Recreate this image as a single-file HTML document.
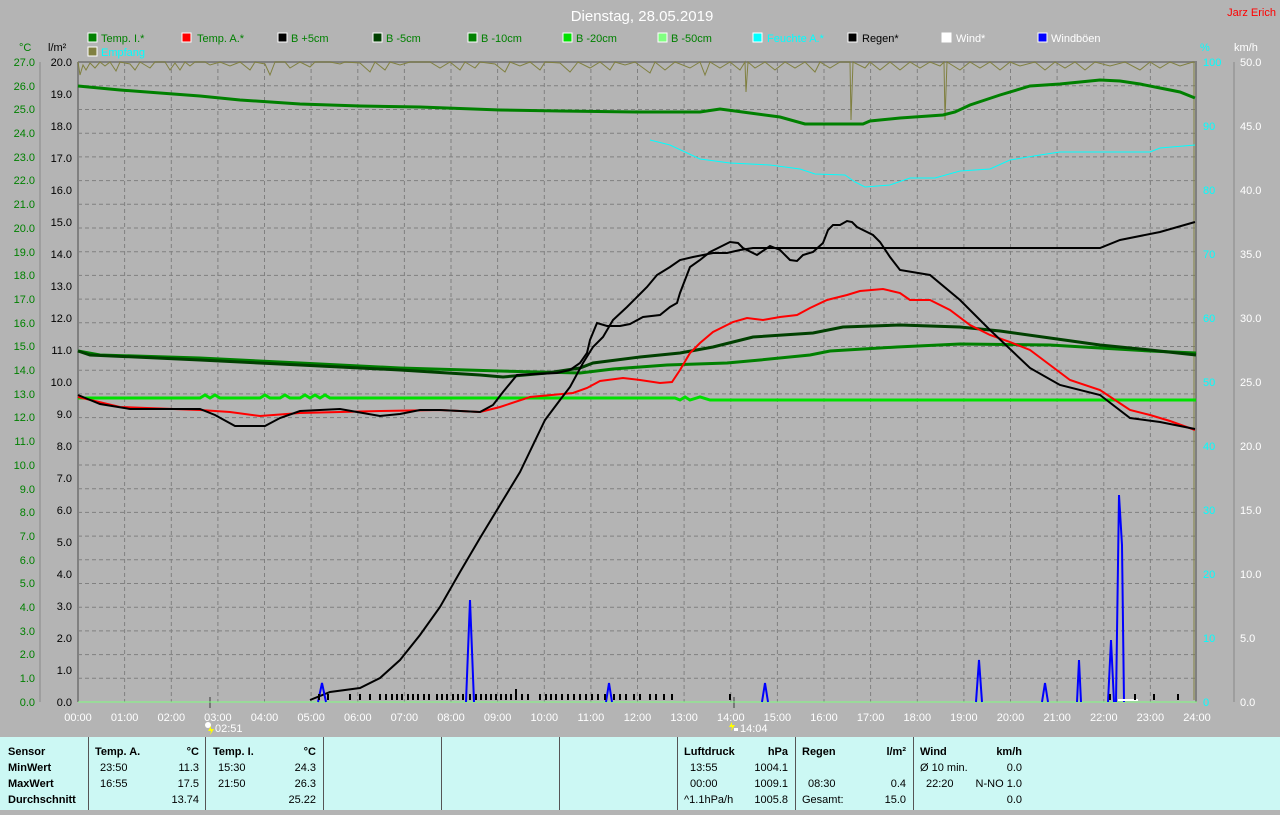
<!DOCTYPE html>
<html><head><meta charset="utf-8"><style>
html,body{margin:0;padding:0;background:#b4b4b4;}
body{width:1280px;height:810px;overflow:hidden;font-family:"Liberation Sans",sans-serif;}
svg text{font-family:"Liberation Sans",sans-serif;}
</style></head><body>
<svg width="1280" height="810" viewBox="0 0 1280 810" xmlns="http://www.w3.org/2000/svg">
<rect x="0" y="0" width="1280" height="810" fill="#b4b4b4"/>
<text x="642" y="21" font-size="15" fill="#fff" text-anchor="middle">Dienstag, 28.05.2019</text>
<text x="1276" y="16" font-size="11" fill="#ff0000" text-anchor="end">Jarz Erich</text>
<!-- legend -->
<g font-size="11">
<rect x="88" y="33" width="9" height="9" fill="#008000" stroke="#fff"/><text x="101" y="42" fill="#008000">Temp. I.*</text>
<rect x="182" y="33" width="9" height="9" fill="#ff0000" stroke="#fff"/><text x="197" y="42" fill="#008000">Temp. A.*</text>
<rect x="278" y="33" width="9" height="9" fill="#000" stroke="#fff"/><text x="291" y="42" fill="#008000">B +5cm</text>
<rect x="373" y="33" width="9" height="9" fill="#004000" stroke="#fff"/><text x="386" y="42" fill="#008000">B -5cm</text>
<rect x="468" y="33" width="9" height="9" fill="#008000" stroke="#fff"/><text x="481" y="42" fill="#008000">B -10cm</text>
<rect x="563" y="33" width="9" height="9" fill="#00e000" stroke="#fff"/><text x="576" y="42" fill="#008000">B -20cm</text>
<rect x="658" y="33" width="9" height="9" fill="#80ff80" stroke="#fff"/><text x="671" y="42" fill="#008000">B -50cm</text>
<rect x="753" y="33" width="9" height="9" fill="#00ffff" stroke="#fff"/><text x="767" y="42" fill="#00ffff">Feuchte A.*</text>
<rect x="848" y="33" width="9" height="9" fill="#000" stroke="#fff"/><text x="862" y="42" fill="#000">Regen*</text>
<rect x="942" y="33" width="9" height="9" fill="#fff" stroke="#fff"/><text x="956" y="42" fill="#fff">Wind*</text>
<rect x="1038" y="33" width="9" height="9" fill="#0000ff" stroke="#fff"/><text x="1051" y="42" fill="#fff">Windböen</text>
<rect x="88" y="47" width="9" height="9" fill="#808040" stroke="#fff"/><text x="101" y="56" fill="#00ffff">Empfang</text>
</g>
<text x="19" y="51" font-size="11" fill="#008000">°C</text>
<text x="48" y="51" font-size="11" fill="#000">l/m²</text>
<text x="1200" y="51" font-size="11" fill="#00ffff">%</text>
<text x="1234" y="51" font-size="11" fill="#fff">km/h</text>
<!-- axes lines -->
<line x1="40" y1="62" x2="40" y2="702" stroke="#888"/>
<line x1="1234" y1="62" x2="1234" y2="702" stroke="#888"/>
<!-- grid -->
<g stroke="#808080" stroke-dasharray="4,3" stroke-width="1">
<line x1="124.6" y1="62" x2="124.6" y2="702"/><line x1="171.3" y1="62" x2="171.3" y2="702"/><line x1="217.9" y1="62" x2="217.9" y2="702"/><line x1="264.5" y1="62" x2="264.5" y2="702"/><line x1="311.1" y1="62" x2="311.1" y2="702"/><line x1="357.8" y1="62" x2="357.8" y2="702"/><line x1="404.4" y1="62" x2="404.4" y2="702"/><line x1="451" y1="62" x2="451" y2="702"/><line x1="497.6" y1="62" x2="497.6" y2="702"/><line x1="544.3" y1="62" x2="544.3" y2="702"/><line x1="590.9" y1="62" x2="590.9" y2="702"/><line x1="637.5" y1="62" x2="637.5" y2="702"/><line x1="684.1" y1="62" x2="684.1" y2="702"/><line x1="730.8" y1="62" x2="730.8" y2="702"/><line x1="777.4" y1="62" x2="777.4" y2="702"/><line x1="824" y1="62" x2="824" y2="702"/><line x1="870.6" y1="62" x2="870.6" y2="702"/><line x1="917.3" y1="62" x2="917.3" y2="702"/><line x1="963.9" y1="62" x2="963.9" y2="702"/><line x1="1010.5" y1="62" x2="1010.5" y2="702"/><line x1="1057.1" y1="62" x2="1057.1" y2="702"/><line x1="1103.8" y1="62" x2="1103.8" y2="702"/><line x1="1150.4" y1="62" x2="1150.4" y2="702"/>
<line x1="78" y1="678.3" x2="1197" y2="678.3"/><line x1="78" y1="654.6" x2="1197" y2="654.6"/><line x1="78" y1="630.9" x2="1197" y2="630.9"/><line x1="78" y1="607.2" x2="1197" y2="607.2"/><line x1="78" y1="583.5" x2="1197" y2="583.5"/><line x1="78" y1="559.8" x2="1197" y2="559.8"/><line x1="78" y1="536.1" x2="1197" y2="536.1"/><line x1="78" y1="512.4" x2="1197" y2="512.4"/><line x1="78" y1="488.7" x2="1197" y2="488.7"/><line x1="78" y1="465" x2="1197" y2="465"/><line x1="78" y1="441.3" x2="1197" y2="441.3"/><line x1="78" y1="417.6" x2="1197" y2="417.6"/><line x1="78" y1="393.9" x2="1197" y2="393.9"/><line x1="78" y1="370.2" x2="1197" y2="370.2"/><line x1="78" y1="346.5" x2="1197" y2="346.5"/><line x1="78" y1="322.8" x2="1197" y2="322.8"/><line x1="78" y1="299.1" x2="1197" y2="299.1"/><line x1="78" y1="275.4" x2="1197" y2="275.4"/><line x1="78" y1="251.7" x2="1197" y2="251.7"/><line x1="78" y1="228" x2="1197" y2="228"/><line x1="78" y1="204.3" x2="1197" y2="204.3"/><line x1="78" y1="180.6" x2="1197" y2="180.6"/><line x1="78" y1="156.9" x2="1197" y2="156.9"/><line x1="78" y1="133.2" x2="1197" y2="133.2"/><line x1="78" y1="109.5" x2="1197" y2="109.5"/><line x1="78" y1="85.8" x2="1197" y2="85.8"/>
</g>
<!-- left C labels -->
<g font-size="11" fill="#008000" text-anchor="end">
<text x="35" y="66">27.0</text><text x="35" y="90">26.0</text><text x="35" y="113">25.0</text><text x="35" y="137">24.0</text><text x="35" y="161">23.0</text><text x="35" y="184">22.0</text><text x="35" y="208">21.0</text><text x="35" y="232">20.0</text><text x="35" y="256">19.0</text><text x="35" y="279">18.0</text><text x="35" y="303">17.0</text><text x="35" y="327">16.0</text><text x="35" y="350">15.0</text><text x="35" y="374">14.0</text><text x="35" y="398">13.0</text><text x="35" y="421">12.0</text><text x="35" y="445">11.0</text><text x="35" y="469">10.0</text><text x="35" y="493">9.0</text><text x="35" y="516">8.0</text><text x="35" y="540">7.0</text><text x="35" y="564">6.0</text><text x="35" y="587">5.0</text><text x="35" y="611">4.0</text><text x="35" y="635">3.0</text><text x="35" y="658">2.0</text><text x="35" y="682">1.0</text><text x="35" y="706">0.0</text>
</g>
<g font-size="11" fill="#000" text-anchor="end">
<text x="72" y="66">20.0</text><text x="72" y="98">19.0</text><text x="72" y="130">18.0</text><text x="72" y="162">17.0</text><text x="72" y="194">16.0</text><text x="72" y="226">15.0</text><text x="72" y="258">14.0</text><text x="72" y="290">13.0</text><text x="72" y="322">12.0</text><text x="72" y="354">11.0</text><text x="72" y="386">10.0</text><text x="72" y="418">9.0</text><text x="72" y="450">8.0</text><text x="72" y="482">7.0</text><text x="72" y="514">6.0</text><text x="72" y="546">5.0</text><text x="72" y="578">4.0</text><text x="72" y="610">3.0</text><text x="72" y="642">2.0</text><text x="72" y="674">1.0</text><text x="72" y="706">0.0</text>
</g>
<g font-size="11" fill="#00ffff">
<text x="1203" y="66">100</text><text x="1203" y="130">90</text><text x="1203" y="194">80</text><text x="1203" y="258">70</text><text x="1203" y="322">60</text><text x="1203" y="386">50</text><text x="1203" y="450">40</text><text x="1203" y="514">30</text><text x="1203" y="578">20</text><text x="1203" y="642">10</text><text x="1203" y="706">0</text>
</g>
<g font-size="11" fill="#fff">
<text x="1240" y="66">50.0</text><text x="1240" y="130">45.0</text><text x="1240" y="194">40.0</text><text x="1240" y="258">35.0</text><text x="1240" y="322">30.0</text><text x="1240" y="386">25.0</text><text x="1240" y="450">20.0</text><text x="1240" y="514">15.0</text><text x="1240" y="578">10.0</text><text x="1240" y="642">5.0</text><text x="1240" y="706">0.0</text>
</g>
<!-- time labels -->
<g font-size="11" fill="#fff" text-anchor="middle">
<text x="78" y="721">00:00</text><text x="124.6" y="721">01:00</text><text x="171.3" y="721">02:00</text><text x="217.9" y="721">03:00</text><text x="264.5" y="721">04:00</text><text x="311.1" y="721">05:00</text><text x="357.8" y="721">06:00</text><text x="404.4" y="721">07:00</text><text x="451" y="721">08:00</text><text x="497.6" y="721">09:00</text><text x="544.3" y="721">10:00</text><text x="590.9" y="721">11:00</text><text x="637.5" y="721">12:00</text><text x="684.1" y="721">13:00</text><text x="730.8" y="721">14:00</text><text x="777.4" y="721">15:00</text><text x="824" y="721">16:00</text><text x="870.6" y="721">17:00</text><text x="917.3" y="721">18:00</text><text x="963.9" y="721">19:00</text><text x="1010.5" y="721">20:00</text><text x="1057.1" y="721">21:00</text><text x="1103.8" y="721">22:00</text><text x="1150.4" y="721">23:00</text><text x="1197" y="721">24:00</text>
</g>
<line x1="210" y1="697" x2="210" y2="708" stroke="#777" stroke-width="2"/>
<line x1="734" y1="697" x2="734" y2="708" stroke="#777" stroke-width="2"/>
<circle cx="208" cy="725" r="3" fill="#fff"/><path d="M211 726 l-3 5 h3 l-1 4 4-6 h-3z" fill="#ff0"/>
<text x="215" y="732" font-size="11" fill="#fff">02:51</text>
<path d="M732 722 l-3 5 h3 l-1 4 4-6 h-3z" fill="#ff0"/><rect x="734" y="728" width="4" height="3" fill="#fff"/>
<text x="740" y="732" font-size="11" fill="#fff">14:04</text>

<!-- plot frame -->
<line x1="78" y1="62" x2="1197" y2="62" stroke="#808080" stroke-width="2"/>
<line x1="78" y1="62" x2="78" y2="702" stroke="#808080" stroke-width="2"/>
<line x1="1196" y1="62" x2="1196" y2="702" stroke="#808080" stroke-width="2"/>
<line x1="78" y1="702" x2="1197" y2="702" stroke="#80ff80" stroke-width="1"/>

<!-- Empfang olive -->
<polyline fill="none" stroke="#808040" stroke-width="1" points="78,62 80,75 83,65 86,70 90,63 95,68 100,62 105,66 110,62 116,71 120,62 130,64 135,70 140,62 150,68 155,62 165,62 170,70 175,63 180,70 185,62 190,66 195,62 205,62 210,65 220,62 230,66 240,62 250,70 255,62 265,64 270,75 275,62 285,62 290,68 300,62 310,67 315,62 330,62 340,64 345,62 360,63 370,72 375,62 385,70 390,62 400,65 410,62 430,62 440,68 450,62 460,70 465,62 475,68 480,62 495,64 505,72 510,62 520,66 530,62 540,70 545,62 560,63 570,72 578,62 590,68 600,62 610,70 615,62 625,65 635,62 650,73 655,62 665,70 675,62 690,68 700,62 705,75 710,62 720,68 730,62 740,70 745,62 746,92 748,62 755,68 765,62 775,70 785,62 795,68 805,62 815,72 820,62 830,68 840,62 850,62 851,120 853,62 865,68 870,62 880,70 890,62 900,70 910,62 920,68 930,62 940,66 944,62 945,120 947,62 960,70 970,62 980,68 990,62 1000,70 1010,62 1020,66 1035,62 1045,70 1055,62 1065,68 1075,62 1085,70 1095,62 1110,66 1125,62 1140,70 1150,62 1160,68 1170,62 1180,66 1193,62 1194,62 1194,700"/>
<!-- Temp I -->
<polyline fill="none" stroke="#008000" stroke-width="3" points="78,86 120,90 160,93 200,96 240,100 300,104 360,106 420,107 500,110 560,111 640,112 700,112 720,109 750,113 780,117 805,124 863,124 870,121 900,118 943,115 955,112 970,105 985,100 1000,95 1030,86 1060,84 1080,82 1100,80 1120,81 1140,84 1160,88 1180,92 1195,98"/>
<!-- Feuchte cyan -->
<polyline fill="none" stroke="#00ffff" stroke-width="1" points="650,140 670,145 700,159 730,163 770,165 800,169 815,174 845,175 855,182 865,187 890,185 910,178 935,178 960,171 990,169 1010,160 1040,155 1060,152 1100,152 1150,152 1160,148 1195,145"/>
<!-- B -20 bright green -->
<polyline fill="none" stroke="#00e000" stroke-width="3" points="78,398 200,398 205,395 210,398 215,395 220,398 260,398 265,395 270,398 280,398 285,395 290,398 300,398 305,395 310,398 315,395 320,398 325,395 330,398 675,398 680,400 685,397 690,400 700,397 710,400 1196,400"/>
<!-- B -10 green -->
<polyline fill="none" stroke="#008000" stroke-width="3" points="78,351 100,355 200,358 300,363 400,368 500,371 580,373 613,369 667,365 727,363 760,360 810,355 830,351 897,347 960,344 1050,345 1100,348 1150,351 1196,353"/>
<!-- B -5 dark green -->
<polyline fill="none" stroke="#004000" stroke-width="3" points="78,351 90,355 200,360 300,365 400,370 480,375 503,377 547,373 580,368 593,363 640,357 680,353 713,347 753,337 813,333 843,327 900,325 960,327 1000,331 1050,338 1100,345 1150,350 1196,355"/>
<!-- Temp A red -->
<polyline fill="none" stroke="#ff0000" stroke-width="2" points="78,397 120,407 200,410 230,412 260,416 300,413 380,411 440,410 480,412 500,407 530,397 573,393 587,388 600,381 623,378 640,380 660,383 672,382 680,370 690,353 700,343 713,332 733,322 747,318 763,320 780,317 797,315 810,308 827,300 847,295 860,291 883,289 900,293 910,300 930,300 950,310 970,325 990,335 1010,342 1030,350 1050,365 1070,380 1100,390 1115,400 1130,410 1150,415 1170,421 1195,430"/>
<!-- B +5 black (temp-like) -->
<polyline fill="none" stroke="#000" stroke-width="2" points="78,395 100,404 130,409 200,409 215,415 235,426 265,426 280,418 300,411 340,409 380,416 400,414 420,410 440,410 480,412 493,405 503,392 517,375 557,373 570,370 580,363 587,353 590,340 597,323 607,326 620,326 630,324 643,317 660,315 670,307 677,303 680,293 690,267 700,260 710,252 720,247 730,242 738,243 743,248 757,255 770,246 780,250 790,260 797,261 803,255 813,252 823,243 828,230 833,225 840,225 847,221 852,222 857,227 867,232 873,235 880,242 890,257 900,270 930,275 960,300 990,330 1030,368 1060,385 1100,395 1130,418 1160,422 1195,429"/>
<!-- steep black -->
<polyline fill="none" stroke="#000" stroke-width="2" points="310,700 330,692 360,688 380,678 400,660 420,635 440,607 460,572 480,538 500,505 520,472 545,420 560,400 570,387 583,363 593,347 603,337 613,320 627,307 637,297 647,287 657,275 670,267 680,260 693,257 713,253 727,253 740,250 753,248 900,248 1100,248 1120,240 1160,232 1195,222"/>
<!-- wind gusts blue -->
<g fill="none" stroke="#0000ff" stroke-width="2">
<polyline points="318,702 322,683 326,702"/>
<polyline points="466,702 470,600 474,702"/>
<polyline points="606,702 609,683 612,702"/>
<polyline points="762,702 765,683 768,702"/>
<polyline points="976,702 979,660 982,702"/>
<polyline points="1042,702 1045,683 1048,702"/>
<polyline points="1077,702 1079,660 1081,702"/>
<polyline points="1108,702 1111,640 1114,702"/>
<polyline points="1116,702 1119,495 1122,545 1124,702"/>
</g>
<path d="M1118 700 h20" stroke="#fff" stroke-width="2"/>
<!-- rain ticks -->
<g stroke="#000" stroke-width="2">
<path d="M319 694v6M328 694v6M350 694v6M360 694v6M370 694v6M380 694v6M386 694v6M392 694v6M397 694v6M402 694v6M408 694v6M413 694v6M418 694v6M424 694v6M429 694v6M437 694v6M442 694v6M447 694v6M453 694v6M458 694v6M463 694v6M470 694v6M476 694v6M481 694v6M486 694v6M491 694v6M496 694v6M501 694v6M506 694v6M511 694v6M516 689v11M522 694v6M528 694v6M540 694v6M546 694v6M551 694v6M556 694v6M562 694v6M568 694v6M574 694v6M580 694v6M586 694v6M592 694v6M598 694v6M605 694v6M614 694v6M620 694v6M626 694v6M634 694v6M640 694v6M650 694v6M656 694v6M664 694v6M672 694v6M730 694v6M1110 694v6M1135 694v6M1154 694v6M1178 694v6"/>
</g>
<!-- table -->
<rect x="0" y="737" width="1280" height="73" fill="#ccf8f4"/>
<g stroke="#555" stroke-width="1">
<line x1="88.5" y1="737" x2="88.5" y2="810"/><line x1="205.5" y1="737" x2="205.5" y2="810"/><line x1="323.5" y1="737" x2="323.5" y2="810"/><line x1="441.5" y1="737" x2="441.5" y2="810"/><line x1="559.5" y1="737" x2="559.5" y2="810"/><line x1="677.5" y1="737" x2="677.5" y2="810"/><line x1="795.5" y1="737" x2="795.5" y2="810"/><line x1="913.5" y1="737" x2="913.5" y2="810"/>
</g>
<g font-size="11" fill="#000">
<g font-weight="bold"><text x="8" y="755">Sensor</text><text x="8" y="771">MinWert</text><text x="8" y="787">MaxWert</text><text x="8" y="803">Durchschnitt</text>
<text x="95" y="755">Temp. A.</text><text x="199" y="755" text-anchor="end">°C</text>
<text x="213" y="755">Temp. I.</text><text x="316" y="755" text-anchor="end">°C</text>
<text x="684" y="755">Luftdruck</text><text x="788" y="755" text-anchor="end">hPa</text>
<text x="802" y="755">Regen</text><text x="906" y="755" text-anchor="end">l/m²</text>
<text x="920" y="755">Wind</text><text x="1022" y="755" text-anchor="end">km/h</text></g>
<text x="100" y="771">23:50</text><text x="199" y="771" text-anchor="end">11.3</text>
<text x="100" y="787">16:55</text><text x="199" y="787" text-anchor="end">17.5</text>
<text x="199" y="803" text-anchor="end">13.74</text>
<text x="218" y="771">15:30</text><text x="316" y="771" text-anchor="end">24.3</text>
<text x="218" y="787">21:50</text><text x="316" y="787" text-anchor="end">26.3</text>
<text x="316" y="803" text-anchor="end">25.22</text>
<text x="690" y="771">13:55</text><text x="788" y="771" text-anchor="end">1004.1</text>
<text x="690" y="787">00:00</text><text x="788" y="787" text-anchor="end">1009.1</text>
<text x="684" y="803">^1.1hPa/h</text><text x="788" y="803" text-anchor="end">1005.8</text>
<text x="808" y="787">08:30</text><text x="906" y="787" text-anchor="end">0.4</text>
<text x="802" y="803">Gesamt:</text><text x="906" y="803" text-anchor="end">15.0</text>
<text x="920" y="771">Ø 10 min.</text><text x="1022" y="771" text-anchor="end">0.0</text>
<text x="926" y="787">22:20</text><text x="1022" y="787" text-anchor="end">N-NO 1.0</text>
<text x="1022" y="803" text-anchor="end">0.0</text>
</g>
</svg>
</body></html>
